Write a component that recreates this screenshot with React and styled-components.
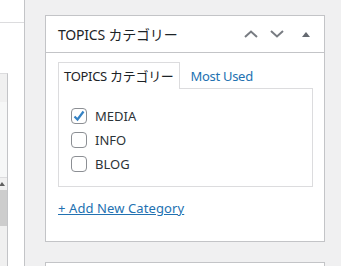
import React from 'react'
import styled, { createGlobalStyle } from 'styled-components'

const Global = createGlobalStyle`
  body {
    margin: 0;
    background: #f0f0f1;
    overflow: hidden;
    font-family: "Noto Sans", "Noto Sans CJK JP", sans-serif;
  }
`

const categories = [
  { name: 'MEDIA', checked: true },
  { name: 'INFO', checked: false },
  { name: 'BLOG', checked: false },
]

function Chevron({ up }) {
  return (
    <svg width="14" height="8" viewBox="0 0 14 8">
      <path
        d={up ? 'M1 7 L7 1.5 L13 7' : 'M1 1 L7 6.5 L13 1'}
        fill="none"
        stroke="#787c82"
        strokeWidth="2"
      />
    </svg>
  )
}

function Check() {
  return (
    <svg width="14" height="14" viewBox="0 0 14 14">
      <path d="M2.5 7.5 L5.5 10.5 L11.5 2.5" fill="none" stroke="#3582c4" strokeWidth="2.2" />
    </svg>
  )
}

export default function App() {
  return (
    <>
      <Global />
      <Page>
        <LeftPane>
          <TopBar />
          <ScrollBox>
            <BoxHead />
            <BoxBody />
            <BoxArrow>
              <ArrowUp />
            </BoxArrow>
            <Thumb />
            <Track />
          </ScrollBox>
        </LeftPane>
        <Main>
          <Panel>
            <Header>
              <Title>TOPICS カテゴリー</Title>
              <Handles>
                <Chevron up />
                <Chevron />
                <Toggle />
              </Handles>
            </Header>
            <Inside>
              <Tabs>
                <Tab active>TOPICS カテゴリー</Tab>
                <Tab>Most Used</Tab>
              </Tabs>
              <TabPanel>
                {categories.map((c) => (
                  <Item key={c.name}>
                    <Box>{c.checked && <Check />}</Box>
                    {c.name}
                  </Item>
                ))}
              </TabPanel>
              <AddLink href="#">+ Add New Category</AddLink>
            </Inside>
          </Panel>
          <NextPanel />
        </Main>
      </Page>
    </>
  )
}

const Page = styled.div`
  display: flex;
  height: 266px;
  overflow: hidden;
`

const LeftPane = styled.div`
  width: 24px;
  background: #fff;
  border-right: 1px solid #c3c4c7;
  display: flex;
  flex-direction: column;
`

const TopBar = styled.div`
  height: 22px;
  border-bottom: 1px solid #dcdcde;
  margin-bottom: 50px;
`

const ScrollBox = styled.div`
  width: 7px;
  flex: 1;
  border-top: 1px solid #dcdcde;
  border-right: 1px solid #c3c4c7;
  display: flex;
  flex-direction: column;
`

const BoxHead = styled.div`
  height: 28px;
  background: #f0f0f0;
`

const BoxBody = styled.div`
  height: 75px;
  background: #f6f7f7;
  border-bottom: 1px solid #dcdcde;
`

const BoxArrow = styled.div`
  height: 12px;
  background: #f0f0f0;
  display: flex;
  align-items: center;
`

const ArrowUp = styled.span`
  width: 0;
  height: 0;
  margin-left: -1px;
  border-left: 3px solid transparent;
  border-right: 3px solid transparent;
  border-bottom: 4px solid #606060;
`

const Thumb = styled.div`
  height: 36px;
  background: #cdcdcd;
`

const Track = styled.div`
  flex: 1;
  background: #f0f0f0;
`

const Main = styled.div`
  padding: 15px 0 0 20px;
`

const Panel = styled.div`
  width: 278px;
  background: #fff;
  border: 1px solid #c3c4c7;
`

const Header = styled.div`
  height: 36px;
  border-bottom: 1px solid #c3c4c7;
  display: flex;
  align-items: center;
  justify-content: space-between;
  padding: 0 14px 0 12px;
`

const Title = styled.h2`
  margin: 0;
  font-size: 14px;
  font-weight: 400;
  color: #1d2327;
  letter-spacing: -0.2px;
`

const Handles = styled.div`
  display: flex;
  align-items: center;
  gap: 12px;
`

const Toggle = styled.span`
  width: 0;
  height: 0;
  margin-left: 6px;
  border-left: 4px solid transparent;
  border-right: 4px solid transparent;
  border-bottom: 5px solid #646970;
`

const Inside = styled.div`
  padding: 9px 11px 23px 12px;
`

const Tabs = styled.div`
  display: flex;
  align-items: flex-end;
`

const Tab = styled.div`
  height: 26px;
  line-height: 26px;
  white-space: nowrap;
  padding: ${(p) => (p.active ? '0 5px 0 5px' : '0 0 0 10px')};
  font-size: 13px;
  letter-spacing: -0.3px;
  color: ${(p) => (p.active ? '#1d2327' : '#2271b1')};
  background: ${(p) => (p.active ? '#fff' : 'transparent')};
  border: 1px solid ${(p) => (p.active ? '#dcdcde' : 'transparent')};
  border-bottom: none;
  margin-bottom: -1px;
  position: relative;
`

const TabPanel = styled.div`
  border: 1px solid #dcdcde;
  height: 78px;
  padding: 19px 0 0 12px;
  display: flex;
  flex-direction: column;
  gap: 8px;
`

const Item = styled.label`
  display: flex;
  align-items: center;
  gap: 8px;
  height: 16px;
  font-size: 13px;
  color: #2c3338;
`

const Box = styled.span`
  width: 14px;
  height: 14px;
  border: 1px solid #8c8f94;
  border-radius: 4px;
  display: flex;
  align-items: center;
  justify-content: center;
`

const AddLink = styled.a`
  display: inline-block;
  margin-top: 12px;
  font-size: 13px;
  color: #2271b1;
  text-decoration: underline;
  letter-spacing: 0.1px;
`

const NextPanel = styled.div`
  margin-top: 20px;
  width: 278px;
  height: 20px;
  background: #fff;
  border: 1px solid #c3c4c7;
`
